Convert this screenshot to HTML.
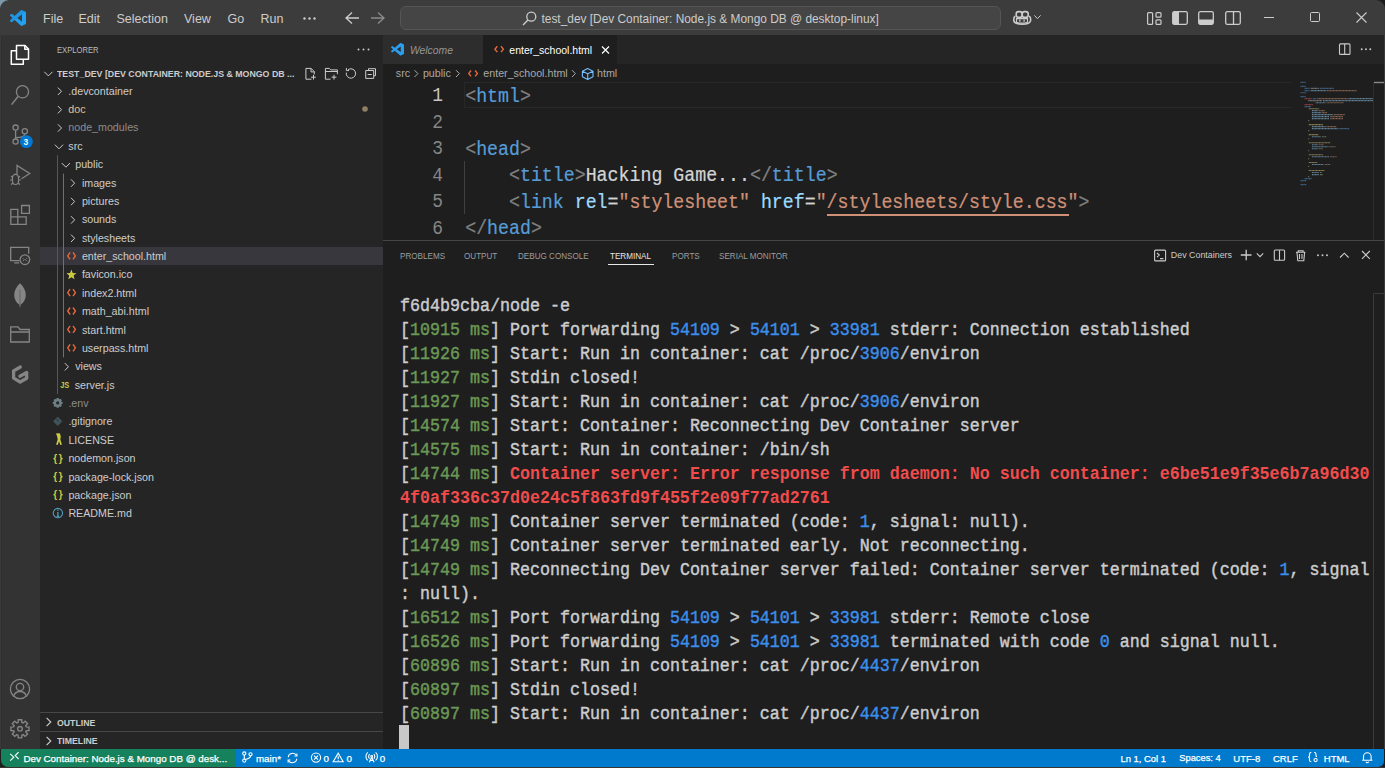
<!DOCTYPE html>
<html><head><meta charset="utf-8">
<style>
*{margin:0;padding:0;box-sizing:border-box}
html,body{width:1385px;height:768px;overflow:hidden;background:#1e1e1e}
body{position:relative;font-family:"Liberation Sans",sans-serif;color:#cccccc}
.a{position:absolute}
.t{position:absolute;white-space:pre}
svg{position:absolute;overflow:visible}
.menu{position:absolute;font-size:12.5px;color:#cccccc;top:12px;line-height:15px}
.row{position:absolute;left:40px;width:343px;height:18.33px;font-size:10.7px;line-height:18.33px;color:#cccccc;white-space:pre}
.term{position:absolute;left:400px;font-family:"Liberation Mono",monospace;font-size:16.67px;line-height:24px;color:#cccccc;white-space:pre;transform:scaleY(1.1);transform-origin:0 16px;-webkit-text-stroke:0.4px}
.g{color:#6a9955}.b{color:#3b8eea}.r{color:#f14c4c;font-weight:bold;-webkit-text-stroke:0}
.code{position:absolute;left:465.2px;font-family:"Liberation Mono",monospace;font-size:18.25px;line-height:26.3px;white-space:pre;color:#d4d4d4;-webkit-text-stroke:0.2px;transform:scaleY(1.1);transform-origin:0 17.9px}
.tg{color:#569cd6}.br{color:#808080}.at{color:#9cdcfe}.st{color:#ce9178}
.ln{position:absolute;width:443px;left:0;text-align:right;font-family:"Liberation Mono",monospace;font-size:17.9px;line-height:26.3px;color:#858585;transform:scaleY(1.08);transform-origin:0 18px}
.ptab{position:absolute;top:249.6px;font-size:9.6px;line-height:11px;color:#9d9d9d;white-space:pre;transform:scaleX(0.845);transform-origin:0 0}
.sb{position:absolute;top:752px;font-size:10.8px;line-height:12px;color:#ffffff;white-space:pre}
</style></head><body>
<!-- backgrounds -->
<div class="a" style="left:0;top:0;width:1385px;height:35px;background:#3c3c3c"></div>
<div class="a" style="left:0;top:35px;width:40px;height:714px;background:#333333"></div>
<div class="a" style="left:0;top:35px;width:1px;height:714px;background:#3a3a3a"></div><div class="a" style="left:1px;top:35px;width:1px;height:714px;background:#2f2f2f"></div>
<div class="a" style="left:40px;top:35px;width:343px;height:714px;background:#252526"></div>
<div class="a" style="left:383px;top:35px;width:1001px;height:29px;background:#252526"></div>
<div class="a" style="left:1384px;top:35px;width:1px;height:714px;background:#3c3c3c"></div>
<div class="a" style="left:0;top:767px;width:1385px;height:1px;background:#3a3530"></div>
<div class="a" style="left:1px;top:749px;width:235px;height:18px;background:#16825d;border-bottom-left-radius:7px"></div>
<div class="a" style="left:236px;top:749px;width:1148px;height:18px;background:#007acc;border-bottom-right-radius:6px"></div>

<svg style="left:0;top:0" width="1385" height="12" viewBox="0 0 1385 12"><path d="M1376 0H1385V9A9 9 0 0 0 1376 0z" fill="#1c1c1c"/><path d="M0 0H9A9 9 0 0 0 0 9z" fill="#7d98aa"/></svg>
<!-- title bar content -->
<svg style="left:10px;top:10px" width="16" height="16" viewBox="0 0 100 100"><path fill="#23a1f0" d="M96.46 10.8L75.86.87a6.23 6.23 0 0 0-7.1 1.2L29.35 38.05 12.19 25a4.16 4.16 0 0 0-5.32.24L1.36 30.25a4.17 4.17 0 0 0 0 6.16L16.24 50 1.35 63.59a4.17 4.17 0 0 0 0 6.160l5.51 5a4.16 4.16 0 0 0 5.32.24l17.16-13 39.41 35.95a6.2 6.2 0 0 0 7.1 1.2l20.6-9.92a6.25 6.25 0 0 0 3.54-5.630V16.43a6.25 6.25 0 0 0-3.53-5.630zM75 72.7L45.1 50 75 27.3z"/><path fill="#1b80c8" d="M96.46 10.8L75.86.87a6.23 6.23 0 0 0-7.1 1.2L29.35 38.05 12.19 25a4.16 4.16 0 0 0-5.32.24L1.36 30.25a4.17 4.17 0 0 0 0 6.16L16.24 50 1.35 63.59a4.17 4.17 0 0 0 0 6.16l5.51 5a4.16 4.16 0 0 0 5.32.24L75 27.3z" opacity="0.35"/></svg>
<div class="menu" style="left:43px">File</div>
<div class="menu" style="left:78.5px">Edit</div>
<div class="menu" style="left:116.5px">Selection</div>
<div class="menu" style="left:184px">View</div>
<div class="menu" style="left:227.5px">Go</div>
<div class="menu" style="left:260.5px">Run</div>
<svg style="left:303px;top:17px" width="14" height="3"><circle cx="1.5" cy="1.5" r="1.2" fill="#cccccc"/><circle cx="6.5" cy="1.5" r="1.2" fill="#cccccc"/><circle cx="11.5" cy="1.5" r="1.2" fill="#cccccc"/></svg>
<svg style="left:344px;top:11px" width="16" height="14" viewBox="0 0 16 14"><path d="M8 1.5L2 7l6 5.5M2 7h13" fill="none" stroke="#cccccc" stroke-width="1.3"/></svg>
<svg style="left:370px;top:11px" width="16" height="14" viewBox="0 0 16 14"><path d="M8 1.5L14 7l-6 5.5M14 7H1" fill="none" stroke="#8b8b8b" stroke-width="1.3"/></svg>
<div class="a" style="left:399.5px;top:6px;width:601.5px;height:24px;border:1px solid #555555;border-radius:6px;background:#454545"></div>
<svg style="left:522px;top:11px" width="15" height="15" viewBox="0 0 15 15"><circle cx="9.3" cy="5.7" r="4.5" fill="none" stroke="#cccccc" stroke-width="1.3"/><path d="M6.2 8.8L1 14" stroke="#cccccc" stroke-width="1.4"/></svg>
<div class="t" style="left:541.5px;top:12px;font-size:11.9px;line-height:14px;color:#cccccc">test_dev [Dev Container: Node.js &amp; Mongo DB @ desktop-linux]</div>
<svg style="left:0;top:0" width="1385" height="35" viewBox="0 0 1385 35"><g fill="none" stroke="#cccccc" stroke-width="1.6"><rect x="1016.2" y="11.6" width="6" height="5.8" rx="2.4"/><rect x="1022.2" y="11.6" width="6" height="5.8" rx="2.4"/><path d="M1015.2 16.2c-1.2.8-1.6 2.6-1.4 4.4.4 2.6 3.8 3.6 8.4 3.6s8-1 8.4-3.6c.2-1.8-.2-3.6-1.4-4.4"/><path d="M1016.5 18.6h11v3.6c-1.5.6-3.5.9-5.5.9s-4-.3-5.5-.9z" stroke-width="1.2"/></g><path d="M1019.9 19.6v2.2M1024.1 19.6v2.2" stroke="#cccccc" stroke-width="1.3"/></svg>
<svg style="left:1034px;top:15px" width="8" height="5" viewBox="0 0 8 5"><path d="M.4.4L3.4 3.6 6.6.4" fill="none" stroke="#cccccc" stroke-width="1"/></svg>
<svg style="left:1147px;top:12px" width="15" height="13" viewBox="0 0 15 13"><rect x="0.6" y="0.6" width="5" height="11.8" rx="1" fill="none" stroke="#cccccc" stroke-width="1.2"/><rect x="9" y="0.6" width="5" height="4.6" rx="1" fill="none" stroke="#cccccc" stroke-width="1.2"/><rect x="9" y="7.8" width="5" height="4.6" rx="1" fill="none" stroke="#cccccc" stroke-width="1.2"/></svg>
<svg style="left:1172px;top:11px" width="16" height="14" viewBox="0 0 16 14"><rect x="0.7" y="0.7" width="14.6" height="12.6" rx="1.5" fill="none" stroke="#cccccc" stroke-width="1.3"/><rect x="1" y="1" width="6" height="12" fill="#cccccc"/></svg>
<svg style="left:1198px;top:11px" width="16" height="14" viewBox="0 0 16 14"><rect x="0.7" y="0.7" width="14.6" height="12.6" rx="1.5" fill="none" stroke="#cccccc" stroke-width="1.3"/><rect x="1" y="8.5" width="14" height="4.5" fill="#cccccc"/></svg>
<svg style="left:1224.5px;top:11px" width="16" height="14" viewBox="0 0 16 14"><rect x="0.7" y="0.7" width="14.6" height="12.6" rx="1.5" fill="none" stroke="#cccccc" stroke-width="1.3"/><path d="M8.5 1v12" stroke="#cccccc" stroke-width="1.3"/></svg>
<div class="a" style="left:1264px;top:17px;width:10px;height:1px;background:#cccccc"></div>
<div class="a" style="left:1310px;top:12px;width:10px;height:10px;border:1px solid #cccccc;border-radius:1.5px"></div>
<svg style="left:1355.5px;top:12px" width="11" height="11" viewBox="0 0 11 11"><path d="M.5.5l10 10M10.5.5l-10 10" stroke="#cccccc" stroke-width="1.1"/></svg>

<!-- activity bar icons -->
<svg style="left:0;top:0" width="40" height="768" viewBox="0 0 40 768">
<g fill="none" stroke="#ffffff" stroke-width="1.5" stroke-linejoin="round">
<path d="M16.5 45.5h8.5l3.5 3.5v10.2h-12z"/><path d="M24.8 45.5v3.7h3.6"/>
<path d="M16.5 50.8h-5.2v13.4h12v-5"/>
</g>
<g fill="none" stroke="#858585" stroke-width="1.3">
<circle cx="22.5" cy="91.8" r="6.1"/><path d="M18 96.5L11.6 104.6" stroke-width="1.5"/>
<circle cx="15.6" cy="127.6" r="2.6"/><circle cx="15.6" cy="141.6" r="2.6"/><circle cx="24.8" cy="131.3" r="2.6"/>
<path d="M15.6 130.2v8.8M24.8 133.9c0 3-3 3.6-9.2 3.8"/>
<path d="M17 174.5V165.5l12.7 8-8.2 5.2"/>
<path d="M12.5 177.5a3 3 0 0 1 6 0v3.5a3 3.5 0 0 1-6 0zM11 176.3l1.5 1.2M20 176.3l-1.5 1.2M10 180h2.5M21 180h-2.5M11 184.5l1.8-1.3M20 184.5l-1.8-1.3M14 175.3a1.5 1.3 0 0 1 3 0" stroke-width="1.2"/>
<path d="M10.8 209.3h7v7.5h-7zM10.8 216.8h7v7.6h-7zM17.8 216.8h8.4v7.6h-8.4zM21.6 205.5h7.8v7.8h-7.8z" stroke-width="1.3"/>
<path d="M19.5 260.6h-8.8v-13.3h18v6.5M14.2 262.9h5" stroke-width="1.3"/>
<circle cx="24.9" cy="259.7" r="4.8" stroke-width="1.3"/>
<path d="M22.8 258.2l1.5 1.5-1.5 1.5M27 258.2l-1.5 1.5 1.5 1.5" stroke-width="0.9"/>
<path d="M10.7 342h18.6v-12.5h-9.3l-2-2.7h-7.3z M10.7 332h18.6" stroke-width="1.3"/>
<path d="M20.3 367L13.6 370.9v7.3l6.5 3.8 6.6-3.8v-5.7l-6.8 3.7" stroke-width="3.3" stroke-linecap="round" stroke-linejoin="round"/>
<circle cx="20" cy="689" r="9.6" stroke-width="1.3"/><circle cx="20" cy="687" r="3.7" stroke-width="1.3"/>
<path d="M13.5 696.5c1-3.5 3.5-5 6.5-5s5.5 1.5 6.5 5" stroke-width="1.3"/>
<path d="M18.05 722.48 L18.25 719.76 L21.65 719.76 L21.85 722.48 L23.08 722.99 L25.14 721.20 L27.55 723.61 L25.76 725.67 L26.27 726.90 L28.99 727.10 L28.99 730.50 L26.27 730.70 L25.76 731.93 L27.55 733.99 L25.14 736.40 L23.08 734.61 L21.85 735.12 L21.65 737.84 L18.25 737.84 L18.05 735.12 L16.82 734.61 L14.76 736.40 L12.35 733.99 L14.14 731.93 L13.63 730.70 L10.91 730.50 L10.91 727.10 L13.63 726.90 L14.14 725.67 L12.35 723.61 L14.76 721.20 L16.82 722.99z" stroke-width="1.4" stroke-linejoin="miter"/>
<circle cx="19.95" cy="728.8" r="2.3" stroke-width="1.4"/>
</g>
<path d="M20 283.2c3.5 3.2 5.8 7.5 5.8 11.8 0 4.8-2.8 8.2-5.2 9.5l-.3 2.7h-.6l-.3-2.7c-2.4-1.3-5.2-4.7-5.2-9.5 0-4.3 2.3-8.6 5.8-11.8z" fill="#858585"/>
<path d="M20 290v14" stroke="#5a5a5a" stroke-width="0.8"/>
<circle cx="26.4" cy="141.6" r="6.4" fill="#0078d4"/>
</svg>
<div class="t" style="left:23.4px;top:136.5px;font-size:8.5px;line-height:10px;font-weight:bold;color:#ffffff">3</div>

<!-- sidebar -->
<div class="a" style="left:40px;top:247.06px;width:343px;height:18.1px;background:#37373d"></div>
<svg style="left:0;top:0" width="383" height="768" viewBox="0 0 383 768">
<path d="M44.3 71.8l4.1 4.1 4.1-4.1" fill="none" stroke="#cccccc" stroke-width="1"/>
<g fill="none" stroke="#cccccc" stroke-width="1">
<path d="M311.5 79.2h-5.6v-10.8h5.2l3.2 3.2v2.8M311 68.4v3.5h3.4M313.5 74.8v4.8M311.1 77.2h4.8"/>
<path d="M330.5 79.2h-5.1v-10.8h4l1.3 1.5h6.7v4.2M325.4 71.5h11.9M334 74.8v4.8M331.6 77.2h4.8"/>
<path d="M346.3 72.6A4.7 4.7 0 1 0 348 69.8M346.4 68v2.6h2.6"/>
<path d="M368.5 70.3v-1.6h7v7h-1.6M365.7 70.5h8v7.9h-8zM367.6 74.5h4.2"/>
</g>
<path d="M57.5 155.2V394.0" stroke="#585858" stroke-width="1"/>
<path d="M63.5 173.6V357.3" stroke="#707070" stroke-width="1"/>
<path d="M57.9 87.6l3.6 3.7-3.6 3.7" fill="none" stroke="#cccccc" stroke-width="1"/>
<path d="M57.9 106.0l3.6 3.7-3.6 3.7" fill="none" stroke="#cccccc" stroke-width="1"/>
<path d="M57.9 124.3l3.6 3.7-3.6 3.7" fill="none" stroke="#cccccc" stroke-width="1"/>
<path d="M54.9 144.7l4.1 4.1 4.1-4.1" fill="none" stroke="#cccccc" stroke-width="1"/>
<path d="M61.8 163.1l4.1 4.1 4.1-4.1" fill="none" stroke="#cccccc" stroke-width="1"/>
<path d="M71.0 179.4l3.6 3.7-3.6 3.7" fill="none" stroke="#cccccc" stroke-width="1"/>
<path d="M71.0 197.8l3.6 3.7-3.6 3.7" fill="none" stroke="#cccccc" stroke-width="1"/>
<path d="M71.0 216.2l3.6 3.7-3.6 3.7" fill="none" stroke="#cccccc" stroke-width="1"/>
<path d="M71.0 234.6l3.6 3.7-3.6 3.7" fill="none" stroke="#cccccc" stroke-width="1"/>
<path d="M70.1 252.4l-2.4 3.5 2.4 3.5M73 252.4l2.4 3.5-2.4 3.5" fill="none" stroke="#e8673b" stroke-width="1.4"/>
<polygon points="71.40,269.60 72.75,273.04 76.44,273.26 73.59,275.61 74.52,279.19 71.40,277.20 68.28,279.19 69.21,275.61 66.36,273.26 70.05,273.04" fill="#cbcb41"/>
<path d="M70.1 289.2l-2.4 3.5 2.4 3.5M73 289.2l2.4 3.5-2.4 3.5" fill="none" stroke="#e8673b" stroke-width="1.4"/>
<path d="M70.1 307.5l-2.4 3.5 2.4 3.5M73 307.5l2.4 3.5-2.4 3.5" fill="none" stroke="#e8673b" stroke-width="1.4"/>
<path d="M70.1 325.9l-2.4 3.5 2.4 3.5M73 325.9l2.4 3.5-2.4 3.5" fill="none" stroke="#e8673b" stroke-width="1.4"/>
<path d="M70.1 344.3l-2.4 3.5 2.4 3.5M73 344.3l2.4 3.5-2.4 3.5" fill="none" stroke="#e8673b" stroke-width="1.4"/>
<path d="M64.8 363.1l3.6 3.7-3.6 3.7" fill="none" stroke="#cccccc" stroke-width="1"/>
<text x="60.2" y="387.7" font-family="Liberation Sans" font-size="8.6" font-weight="bold" fill="#cbcb41" textLength="9" lengthAdjust="spacingAndGlyphs">JS</text>
<path d="M60.99 401.42 L62.60 401.90 L62.60 403.88 L60.99 404.36 L61.06 404.18 L61.87 405.65 L60.46 407.06 L58.99 406.25 L59.17 406.18 L58.69 407.79 L56.71 407.79 L56.23 406.18 L56.41 406.25 L54.94 407.06 L53.53 405.65 L54.34 404.18 L54.41 404.36 L52.80 403.88 L52.80 401.90 L54.41 401.42 L54.34 401.60 L53.53 400.13 L54.94 398.72 L56.41 399.53 L56.23 399.60 L56.71 397.99 L58.69 397.99 L59.17 399.60 L58.99 399.53 L60.46 398.72 L61.87 400.13 L61.06 401.60z M56.10 402.89a1.6 1.6 0 1 0 3.2 0a1.6 1.6 0 1 0-3.2 0z" fill="#6d8086" fill-rule="evenodd"/>
<path d="M57.7 416.7l4.6 4.6-4.6 4.6-4.6-4.6z" fill="#41535b"/><path d="M56.5 419.3l2.4 2.4" stroke="#252526" stroke-width="0.9"/>
<path d="M56 433.6l2 -0.3 2 0.3 0.8 3-0.5 3 1.6 5-1.6 0.3-1.3-3.7-1.3 3.7-1.6-0.3 1.6-5-0.5-3z" fill="#cbcb41"/>
<text x="53.2" y="461.6" font-family="Liberation Sans" font-size="10" font-weight="bold" fill="#cbcb41">{</text><text x="58.8" y="461.6" font-family="Liberation Sans" font-size="10" font-weight="bold" fill="#cbcb41">}</text>
<text x="53.2" y="480.0" font-family="Liberation Sans" font-size="10" font-weight="bold" fill="#cbcb41">{</text><text x="58.8" y="480.0" font-family="Liberation Sans" font-size="10" font-weight="bold" fill="#cbcb41">}</text>
<text x="53.2" y="498.3" font-family="Liberation Sans" font-size="10" font-weight="bold" fill="#cbcb41">{</text><text x="58.8" y="498.3" font-family="Liberation Sans" font-size="10" font-weight="bold" fill="#cbcb41">}</text>
<circle cx="57.9" cy="513.1" r="4.7" fill="none" stroke="#519aba" stroke-width="1.1"/><path d="M57.9 512.1v4.2M56.6 516.3h2.6" stroke="#519aba" stroke-width="1.3"/><circle cx="57.9" cy="510.3" r="0.8" fill="#519aba"/>
<circle cx="365" cy="109.0" r="2.8" fill="#9b8a6c" opacity="0.9"/>
<path d="M40 712.5h343M40 731.5h343" stroke="#474747" stroke-width="1"/>
<path d="M46.6 717.8l4.2 4.2-4.2 4.2M46.6 736.8l4.2 4.2-4.2 4.2" fill="none" stroke="#cccccc" stroke-width="1.1"/>
</svg>
<div class="row" style="left:68.3px;top:81.73px;width:auto;color:#cccccc">.devcontainer</div>
<div class="row" style="left:68.3px;top:100.10px;width:auto;color:#e2c08d">doc</div>
<div class="row" style="left:68.3px;top:118.47px;width:auto;color:#8c8c8c">node_modules</div>
<div class="row" style="left:68.3px;top:136.84px;width:auto;color:#cccccc">src</div>
<div class="row" style="left:75.2px;top:155.21px;width:auto;color:#cccccc">public</div>
<div class="row" style="left:81.9px;top:173.58px;width:auto;color:#cccccc">images</div>
<div class="row" style="left:81.9px;top:191.95px;width:auto;color:#cccccc">pictures</div>
<div class="row" style="left:81.9px;top:210.32px;width:auto;color:#cccccc">sounds</div>
<div class="row" style="left:81.9px;top:228.69px;width:auto;color:#cccccc">stylesheets</div>
<div class="row" style="left:81.9px;top:247.06px;width:auto;color:#cccccc">enter_school.html</div>
<div class="row" style="left:81.9px;top:265.43px;width:auto;color:#cccccc">favicon.ico</div>
<div class="row" style="left:81.9px;top:283.80px;width:auto;color:#cccccc">index2.html</div>
<div class="row" style="left:81.9px;top:302.17px;width:auto;color:#cccccc">math_abi.html</div>
<div class="row" style="left:81.9px;top:320.54px;width:auto;color:#cccccc">start.html</div>
<div class="row" style="left:81.9px;top:338.91px;width:auto;color:#cccccc">userpass.html</div>
<div class="row" style="left:75.2px;top:357.28px;width:auto;color:#cccccc">views</div>
<div class="row" style="left:74.7px;top:375.65px;width:auto;color:#cccccc">server.js</div>
<div class="row" style="left:68.4px;top:394.02px;width:auto;color:#8c8c8c">.env</div>
<div class="row" style="left:68.4px;top:412.39px;width:auto;color:#cccccc">.gitignore</div>
<div class="row" style="left:68.4px;top:430.76px;width:auto;color:#cccccc">LICENSE</div>
<div class="row" style="left:68.4px;top:449.13px;width:auto;color:#cccccc">nodemon.json</div>
<div class="row" style="left:68.4px;top:467.50px;width:auto;color:#cccccc">package-lock.json</div>
<div class="row" style="left:68.4px;top:485.87px;width:auto;color:#cccccc">package.json</div>
<div class="row" style="left:68.4px;top:504.24px;width:auto;color:#cccccc">README.md</div>
<div class="t" style="left:57px;top:43.6px;font-size:9.8px;line-height:11px;color:#bbbbbb;transform:scaleX(0.78);transform-origin:0 0">EXPLORER</div>
<svg style="left:357px;top:48px" width="13" height="3"><circle cx="1.5" cy="1.5" r="0.95" fill="#cccccc"/><circle cx="6.5" cy="1.5" r="0.95" fill="#cccccc"/><circle cx="11.5" cy="1.5" r="0.95" fill="#cccccc"/></svg>
<div class="t" style="left:57px;top:67.6px;font-size:9.6px;line-height:11px;font-weight:bold;color:#cccccc;transform:scaleX(0.917);transform-origin:0 0">TEST_DEV [DEV CONTAINER: NODE.JS &amp; MONGO DB ...</div>
<div class="t" style="left:57px;top:716.8px;font-size:9.4px;line-height:11px;font-weight:bold;color:#cccccc;transform:scaleX(0.93);transform-origin:0 0">OUTLINE</div>
<div class="t" style="left:57px;top:734.8px;font-size:9.4px;line-height:11px;font-weight:bold;color:#cccccc;transform:scaleX(0.93);transform-origin:0 0">TIMELINE</div>
<!-- editor -->
<div class="a" style="left:383px;top:35px;width:99.6px;height:29px;background:#2d2d2d"></div>
<div class="a" style="left:482.6px;top:35px;width:134.4px;height:29px;background:#1e1e1e"></div>
<svg style="left:391px;top:43.3px" width="13" height="12.5" viewBox="0 0 100 100" preserveAspectRatio="none"><path fill="#2a9ef0" d="M96.46 10.8L75.86.87a6.23 6.23 0 0 0-7.1 1.2L29.35 38.05 12.19 25a4.16 4.16 0 0 0-5.32.24L1.36 30.25a4.17 4.17 0 0 0 0 6.16L16.24 50 1.35 63.59a4.17 4.17 0 0 0 0 6.16l5.51 5a4.16 4.16 0 0 0 5.32.24l17.16-13 39.41 35.95a6.2 6.2 0 0 0 7.1 1.2l20.6-9.92a6.25 6.25 0 0 0 3.54-5.63V16.43a6.25 6.25 0 0 0-3.53-5.63zM75 72.7L45.1 50 75 27.3z"/></svg>
<div class="t" style="left:409.9px;top:44.5px;font-size:10.4px;line-height:12px;font-style:italic;color:#969696">Welcome</div>
<svg style="left:0;top:0" width="1385" height="90" viewBox="0 0 1385 90">
<path d="M497.3 46.3l-2.4 2.9 2.4 2.9M501 46.3l2.4 2.9-2.4 2.9" fill="none" stroke="#e8673b" stroke-width="1.4"/>
<path d="M602 46.5l7 7M609 46.5l-7 7" stroke="#ffffff" stroke-width="1.2"/>
<rect x="1339.5" y="43.9" width="10.5" height="10.5" rx="1" fill="none" stroke="#cccccc" stroke-width="1.1"/><path d="M1344.7 44v10.3" stroke="#cccccc" stroke-width="1.1"/>
<circle cx="1361.7" cy="49.3" r="0.95" fill="#cccccc"/><circle cx="1366" cy="49.3" r="0.95" fill="#cccccc"/><circle cx="1370.3" cy="49.3" r="0.95" fill="#cccccc"/>
<path d="M414.5 70.2l3.4 3.4-3.4 3.4" fill="none" stroke="#a9a9a9" stroke-width="1"/>
<path d="M456.0 70.2l3.4 3.4-3.4 3.4" fill="none" stroke="#a9a9a9" stroke-width="1"/>
<path d="M572.0 70.2l3.4 3.4-3.4 3.4" fill="none" stroke="#a9a9a9" stroke-width="1"/>
<path d="M471 70.5l-2.2 2.9 2.2 2.9M475.2 70.5l2.2 2.9-2.2 2.9" fill="none" stroke="#e8673b" stroke-width="1.4"/>
<path d="M587.7 68.6l5.3 2.6v5.6l-5.3 2.6-5.3-2.6v-5.6zM582.4 71.2l5.3 2.6 5.3-2.6M587.7 73.8v5.6" fill="none" stroke="#75beff" stroke-width="1.1" stroke-linejoin="round"/>
</svg>
<div class="t" style="left:509.3px;top:44px;font-size:10.5px;line-height:12px;color:#ffffff">enter_school.html</div>
<div class="t" style="left:395.8px;font-size:10.7px;line-height:12px;color:#a9a9a9;top:67.3px">src</div>
<div class="t" style="left:422.9px;font-size:10.7px;line-height:12px;color:#a9a9a9;top:67.3px">public</div>
<div class="t" style="left:483.3px;font-size:10.7px;line-height:12px;color:#a9a9a9;top:67.3px">enter_school.html</div>
<div class="t" style="left:597px;font-size:10.7px;line-height:12px;color:#a9a9a9;top:67.3px">html</div>
<div class="a" style="left:464px;top:82px;width:828px;height:26.3px;border:1px solid #282828;border-right:0"></div>
<div class="ln" style="top:83.0px;color:#c6c6c6">1</div>
<div class="ln" style="top:109.5px;color:#858585">2</div>
<div class="ln" style="top:136.0px;color:#858585">3</div>
<div class="ln" style="top:162.5px;color:#858585">4</div>
<div class="ln" style="top:189.0px;color:#858585">5</div>
<div class="ln" style="top:215.5px;color:#858585">6</div>
<div class="code" style="top:83.6px"><span class="br">&lt;</span><span class="tg">html</span><span class="br">&gt;</span></div>
<div class="code" style="top:110.1px"></div>
<div class="code" style="top:136.6px"><span class="br">&lt;</span><span class="tg">head</span><span class="br">&gt;</span></div>
<div class="code" style="top:163.1px">    <span class="br">&lt;</span><span class="tg">title</span><span class="br">&gt;</span>Hacking Game...<span class="br">&lt;/</span><span class="tg">title</span><span class="br">&gt;</span></div>
<div class="code" style="top:189.6px">    <span class="br">&lt;</span><span class="tg">link</span> <span class="at">rel</span>=<span class="st">"stylesheet"</span> <span class="at">href</span>=<span class="st">"/stylesheets/style.css"</span><span class="br">&gt;</span></div>
<div class="code" style="top:216.1px"><span class="br">&lt;/</span><span class="tg">head</span><span class="br">&gt;</span></div>
<div class="a" style="left:827px;top:214px;width:242px;height:1.5px;background:#ce9178"></div>
<div class="a" style="left:464px;top:161px;width:1px;height:52.6px;background:#404040"></div>
<svg style="left:0;top:0" width="1385" height="240" viewBox="0 0 1385 240">
<path d="M1300.5 82.38h5.1" stroke="#4a7fae" stroke-width="1.1" stroke-dasharray="1.1 0.35" opacity="0.75"/>
<path d="M1300.5 86.39h5.1" stroke="#4a7fae" stroke-width="1.1" stroke-dasharray="1.1 0.35" opacity="0.75"/>
<path d="M1304.6 88.39h4.9" stroke="#4a7fae" stroke-width="1.1" stroke-dasharray="1.1 0.35" opacity="0.75"/>
<path d="M1310.7 88.39h8.0" stroke="#9a9a9a" stroke-width="1.1" stroke-dasharray="1.1 0.35" opacity="0.75"/>
<path d="M1319.8 88.39h14.0" stroke="#4a7fae" stroke-width="1.1" stroke-dasharray="1.1 0.35" opacity="0.75"/>
<path d="M1304.6 90.58h4.9" stroke="#4a7fae" stroke-width="1.1" stroke-dasharray="1.1 0.35" opacity="0.75"/>
<path d="M1310.7 90.58h15.9" stroke="#7aa6c2" stroke-width="1.1" stroke-dasharray="1.1 0.35" opacity="0.75"/>
<path d="M1327.1 90.58h29.5" stroke="#a77a63" stroke-width="1.1" stroke-dasharray="1.1 0.35" opacity="0.75"/>
<path d="M1300.5 92.76h6.0" stroke="#4a7fae" stroke-width="1.1" stroke-dasharray="1.1 0.35" opacity="0.75"/>
<path d="M1300.5 96.59h5.1" stroke="#4a7fae" stroke-width="1.1" stroke-dasharray="1.1 0.35" opacity="0.75"/>
<path d="M1304.6 98.59h7.3" stroke="#c04a4a" stroke-width="1.1" stroke-dasharray="1.1 0.35" opacity="0.75"/>
<path d="M1312.8 98.59h3.6" stroke="#4a7fae" stroke-width="1.1" stroke-dasharray="1.1 0.35" opacity="0.75"/>
<path d="M1317.4 98.59h30.1" stroke="#a77a63" stroke-width="1.1" stroke-dasharray="1.1 0.35" opacity="0.75"/>
<path d="M1348.4 98.59h24.6" stroke="#7aa6c2" stroke-width="1.1" stroke-dasharray="1.1 0.35" opacity="0.75"/>
<path d="M1308.3 100.60h13.7" stroke="#9a9a9a" stroke-width="1.1" stroke-dasharray="1.1 0.35" opacity="0.75"/>
<path d="M1322.9 100.60h50.1" stroke="#7aa6c2" stroke-width="1.1" stroke-dasharray="1.1 0.35" opacity="0.75"/>
<path d="M1315.6 102.79h10.0" stroke="#7aa6c2" stroke-width="1.1" stroke-dasharray="1.1 0.35" opacity="0.75"/>
<path d="M1326.5 102.79h17.3" stroke="#a77a63" stroke-width="1.1" stroke-dasharray="1.1 0.35" opacity="0.75"/>
<path d="M1304.6 104.61h8.2" stroke="#c04a4a" stroke-width="1.1" stroke-dasharray="1.1 0.35" opacity="0.75"/>
<path d="M1304.6 106.61h6.4" stroke="#4a7fae" stroke-width="1.1" stroke-dasharray="1.1 0.35" opacity="0.75"/>
<path d="M1308.8 108.80h10.4" stroke="#b9a76a" stroke-width="1.1" stroke-dasharray="1.1 0.35" opacity="0.75"/>
<path d="M1311.9 110.62h6.4" stroke="#7aa6c2" stroke-width="1.1" stroke-dasharray="1.1 0.35" opacity="0.75"/>
<path d="M1319.2 110.62h5.5" stroke="#a77a63" stroke-width="1.1" stroke-dasharray="1.1 0.35" opacity="0.75"/>
<path d="M1311.9 112.62h9.1" stroke="#7aa6c2" stroke-width="1.1" stroke-dasharray="1.1 0.35" opacity="0.75"/>
<path d="M1321.6 112.62h5.8" stroke="#a77a63" stroke-width="1.1" stroke-dasharray="1.1 0.35" opacity="0.75"/>
<path d="M1311.9 114.63h21.0" stroke="#7aa6c2" stroke-width="1.1" stroke-dasharray="1.1 0.35" opacity="0.75"/>
<path d="M1333.8 114.63h10.9" stroke="#a77a63" stroke-width="1.1" stroke-dasharray="1.1 0.35" opacity="0.75"/>
<path d="M1311.9 116.63h17.3" stroke="#7aa6c2" stroke-width="1.1" stroke-dasharray="1.1 0.35" opacity="0.75"/>
<path d="M1330.2 116.63h12.8" stroke="#a77a63" stroke-width="1.1" stroke-dasharray="1.1 0.35" opacity="0.75"/>
<path d="M1311.9 118.64h17.3" stroke="#7aa6c2" stroke-width="1.1" stroke-dasharray="1.1 0.35" opacity="0.75"/>
<path d="M1330.2 118.64h12.8" stroke="#a77a63" stroke-width="1.1" stroke-dasharray="1.1 0.35" opacity="0.75"/>
<path d="M1308.3 120.64h0.9" stroke="#9a9a9a" stroke-width="1.1" stroke-dasharray="1.1 0.35" opacity="0.75"/>
<path d="M1308.8 124.65h14.0" stroke="#b9a76a" stroke-width="1.1" stroke-dasharray="1.1 0.35" opacity="0.75"/>
<path d="M1311.9 126.66h13.7" stroke="#7aa6c2" stroke-width="1.1" stroke-dasharray="1.1 0.35" opacity="0.75"/>
<path d="M1326.5 126.66h10.0" stroke="#a77a63" stroke-width="1.1" stroke-dasharray="1.1 0.35" opacity="0.75"/>
<path d="M1311.9 128.66h26.4" stroke="#7aa6c2" stroke-width="1.1" stroke-dasharray="1.1 0.35" opacity="0.75"/>
<path d="M1339.3 128.66h10.0" stroke="#4a7fae" stroke-width="1.1" stroke-dasharray="1.1 0.35" opacity="0.75"/>
<path d="M1308.3 130.66h0.9" stroke="#9a9a9a" stroke-width="1.1" stroke-dasharray="1.1 0.35" opacity="0.75"/>
<path d="M1308.8 134.67h9.5" stroke="#b9a76a" stroke-width="1.1" stroke-dasharray="1.1 0.35" opacity="0.75"/>
<path d="M1311.9 136.68h9.1" stroke="#7aa6c2" stroke-width="1.1" stroke-dasharray="1.1 0.35" opacity="0.75"/>
<path d="M1322.0 136.68h4.6" stroke="#7f9a6a" stroke-width="1.1" stroke-dasharray="1.1 0.35" opacity="0.75"/>
<path d="M1308.3 138.68h0.9" stroke="#9a9a9a" stroke-width="1.1" stroke-dasharray="1.1 0.35" opacity="0.75"/>
<path d="M1308.8 142.69h21.3" stroke="#b9a76a" stroke-width="1.1" stroke-dasharray="1.1 0.35" opacity="0.75"/>
<path d="M1311.9 144.69h6.4" stroke="#7aa6c2" stroke-width="1.1" stroke-dasharray="1.1 0.35" opacity="0.75"/>
<path d="M1319.2 144.69h4.6" stroke="#a77a63" stroke-width="1.1" stroke-dasharray="1.1 0.35" opacity="0.75"/>
<path d="M1311.9 146.70h16.4" stroke="#7aa6c2" stroke-width="1.1" stroke-dasharray="1.1 0.35" opacity="0.75"/>
<path d="M1329.2 146.70h6.4" stroke="#a77a63" stroke-width="1.1" stroke-dasharray="1.1 0.35" opacity="0.75"/>
<path d="M1311.9 148.70h6.4" stroke="#7aa6c2" stroke-width="1.1" stroke-dasharray="1.1 0.35" opacity="0.75"/>
<path d="M1319.2 148.70h3.6" stroke="#7f9a6a" stroke-width="1.1" stroke-dasharray="1.1 0.35" opacity="0.75"/>
<path d="M1308.3 150.71h0.9" stroke="#9a9a9a" stroke-width="1.1" stroke-dasharray="1.1 0.35" opacity="0.75"/>
<path d="M1308.8 154.72h14.0" stroke="#b9a76a" stroke-width="1.1" stroke-dasharray="1.1 0.35" opacity="0.75"/>
<path d="M1311.9 156.72h17.3" stroke="#7aa6c2" stroke-width="1.1" stroke-dasharray="1.1 0.35" opacity="0.75"/>
<path d="M1330.2 156.72h6.4" stroke="#a77a63" stroke-width="1.1" stroke-dasharray="1.1 0.35" opacity="0.75"/>
<path d="M1308.3 158.73h0.9" stroke="#9a9a9a" stroke-width="1.1" stroke-dasharray="1.1 0.35" opacity="0.75"/>
<path d="M1308.8 162.55h8.6" stroke="#b9a76a" stroke-width="1.1" stroke-dasharray="1.1 0.35" opacity="0.75"/>
<path d="M1311.9 164.56h11.8" stroke="#7aa6c2" stroke-width="1.1" stroke-dasharray="1.1 0.35" opacity="0.75"/>
<path d="M1324.7 164.56h5.5" stroke="#a77a63" stroke-width="1.1" stroke-dasharray="1.1 0.35" opacity="0.75"/>
<path d="M1308.3 166.56h0.9" stroke="#9a9a9a" stroke-width="1.1" stroke-dasharray="1.1 0.35" opacity="0.75"/>
<path d="M1308.8 170.57h15.9" stroke="#b9a76a" stroke-width="1.1" stroke-dasharray="1.1 0.35" opacity="0.75"/>
<path d="M1311.9 172.57h7.3" stroke="#7aa6c2" stroke-width="1.1" stroke-dasharray="1.1 0.35" opacity="0.75"/>
<path d="M1320.1 172.57h1.8" stroke="#7f9a6a" stroke-width="1.1" stroke-dasharray="1.1 0.35" opacity="0.75"/>
<path d="M1311.9 174.58h7.3" stroke="#7aa6c2" stroke-width="1.1" stroke-dasharray="1.1 0.35" opacity="0.75"/>
<path d="M1320.1 174.58h2.7" stroke="#7f9a6a" stroke-width="1.1" stroke-dasharray="1.1 0.35" opacity="0.75"/>
<path d="M1308.3 176.58h0.9" stroke="#9a9a9a" stroke-width="1.1" stroke-dasharray="1.1 0.35" opacity="0.75"/>
<path d="M1304.6 178.59h7.3" stroke="#4a7fae" stroke-width="1.1" stroke-dasharray="1.1 0.35" opacity="0.75"/>
<path d="M1300.5 180.59h6.0" stroke="#4a7fae" stroke-width="1.1" stroke-dasharray="1.1 0.35" opacity="0.75"/>
<path d="M1300.5 184.60h6.0" stroke="#4a7fae" stroke-width="1.1" stroke-dasharray="1.1 0.35" opacity="0.75"/>
<path d="M1373.5 82v158" stroke="#2e2e2e" stroke-width="1"/>
<path d="M1374 82.5h10" stroke="#8a8a8a" stroke-width="1.4"/>
</svg>
<!-- panel -->
<div class="a" style="left:383px;top:240px;width:1001px;height:1px;background:#454545"></div>
<div class="ptab" style="left:399.5px;color:#9d9d9d">PROBLEMS</div>
<div class="ptab" style="left:463.9px;color:#9d9d9d">OUTPUT</div>
<div class="ptab" style="left:517.9px;color:#9d9d9d">DEBUG CONSOLE</div>
<div class="ptab" style="left:609.7px;color:#e7e7e7">TERMINAL</div>
<div class="ptab" style="left:671.7px;color:#9d9d9d">PORTS</div>
<div class="ptab" style="left:718.5px;color:#9d9d9d">SERIAL MONITOR</div>
<div class="a" style="left:608px;top:263.5px;width:46px;height:1.2px;background:#e7e7e7"></div>
<svg style="left:0;top:0" width="1385" height="768" viewBox="0 0 1385 768">
<g fill="none" stroke="#cccccc" stroke-width="1.1">
<rect x="1154.6" y="250.1" width="11" height="10.8" rx="1"/><path d="M1157 253l2.3 2.1-2.3 2.1M1160 258.6h3.4"/>
<path d="M1246.2 249.8v10.5M1240.8 255h10.7" stroke-width="1.3"/>
<path d="M1256.8 253.4l3.2 3.3 3.2-3.3"/>
<rect x="1274.3" y="250" width="10.3" height="10.3" rx="1"/><path d="M1279.5 250.2v10"/>
<path d="M1296 252.3h9.4M1298.3 252.3v-1.5h4.8v1.5M1297 252.5l.8 8.3h6l.8-8.3M1299.5 254v5M1302 254v5"/>
<path d="M1340 257.5l4.3-4.3 4.3 4.3"/>
<path d="M1362 251l7.8 7.8M1369.8 251l-7.8 7.8"/>
</g>
<circle cx="1318" cy="255.2" r="0.95" fill="#cccccc"/><circle cx="1322.5" cy="255.2" r="0.95" fill="#cccccc"/><circle cx="1327" cy="255.2" r="0.95" fill="#cccccc"/>
<path d="M1373.5 240v-5" stroke="#2e2e2e"/>
<path d="M1373.5 293.5V749M1374 293.5h10" stroke="#3a3a3a" stroke-width="1"/>
</svg>
<div class="t" style="left:1170.8px;top:250px;font-size:8.9px;line-height:11px;color:#cccccc">Dev Containers</div>
<div class="term" style="top:295.0px">f6d4b9cba/node -e</div>
<div class="term" style="top:319.0px">[<span class="g">10915 ms</span>] Port forwarding <span class="b">54109</span> &gt; <span class="b">54101</span> &gt; <span class="b">33981</span> stderr: Connection established</div>
<div class="term" style="top:343.0px">[<span class="g">11926 ms</span>] Start: Run in container: cat /proc/<span class="b">3906</span>/environ</div>
<div class="term" style="top:367.0px">[<span class="g">11927 ms</span>] Stdin closed!</div>
<div class="term" style="top:391.0px">[<span class="g">11927 ms</span>] Start: Run in container: cat /proc/<span class="b">3906</span>/environ</div>
<div class="term" style="top:415.0px">[<span class="g">14574 ms</span>] Start: Container: Reconnecting Dev Container server</div>
<div class="term" style="top:439.0px">[<span class="g">14575 ms</span>] Start: Run in container: /bin/sh</div>
<div class="term" style="top:463.0px">[<span class="g">14744 ms</span>] <span class="r">Container server: Error response from daemon: No such container: e6be51e9f35e6b7a96d30</span></div>
<div class="term" style="top:487.0px"><span class="r">4f0af336c37d0e24c5f863fd9f455f2e09f77ad2761</span></div>
<div class="term" style="top:511.0px">[<span class="g">14749 ms</span>] Container server terminated (code: <span class="b">1</span>, signal: null).</div>
<div class="term" style="top:535.0px">[<span class="g">14749 ms</span>] Container server terminated early. Not reconnecting.</div>
<div class="term" style="top:559.0px">[<span class="g">14749 ms</span>] Reconnecting Dev Container server failed: Container server terminated (code: <span class="b">1</span>, signal</div>
<div class="term" style="top:583.0px">: null).</div>
<div class="term" style="top:607.0px">[<span class="g">16512 ms</span>] Port forwarding <span class="b">54109</span> &gt; <span class="b">54101</span> &gt; <span class="b">33981</span> stderr: Remote close</div>
<div class="term" style="top:631.0px">[<span class="g">16526 ms</span>] Port forwarding <span class="b">54109</span> &gt; <span class="b">54101</span> &gt; <span class="b">33981</span> terminated with code <span class="b">0</span> and signal null.</div>
<div class="term" style="top:655.0px">[<span class="g">60896 ms</span>] Start: Run in container: cat /proc/<span class="b">4437</span>/environ</div>
<div class="term" style="top:679.0px">[<span class="g">60897 ms</span>] Stdin closed!</div>
<div class="term" style="top:703.0px">[<span class="g">60897 ms</span>] Start: Run in container: cat /proc/<span class="b">4437</span>/environ</div>
<div class="a" style="left:399px;top:725px;width:10px;height:24px;background:#c8c8c8"></div>
<!-- status -->
<div class="t" style="left:23.4px;font-size:9.80px;line-height:11px;color:#ffffff;top:753px;-webkit-text-stroke:0.25px #ffffff">Dev Container: Node.js &amp; Mongo DB @ desk...</div>
<div class="t" style="left:255.9px;font-size:9.80px;line-height:11px;color:#ffffff;top:753px;-webkit-text-stroke:0.25px #ffffff">main*</div>
<div class="t" style="left:323.6px;font-size:9.80px;line-height:11px;color:#ffffff;top:753px;-webkit-text-stroke:0.25px #ffffff">0</div>
<div class="t" style="left:346.4px;font-size:9.80px;line-height:11px;color:#ffffff;top:753px;-webkit-text-stroke:0.25px #ffffff">0</div>
<div class="t" style="left:379.7px;font-size:9.80px;line-height:11px;color:#ffffff;top:753px;-webkit-text-stroke:0.25px #ffffff">0</div>
<div class="t" style="left:1120.4px;font-size:9.45px;line-height:11px;color:#ffffff;top:753px;-webkit-text-stroke:0.25px #ffffff">Ln 1, Col 1</div>
<div class="t" style="left:1179.3px;font-size:9.30px;line-height:11px;color:#ffffff;top:753px;-webkit-text-stroke:0.25px #ffffff">Spaces: 4</div>
<div class="t" style="left:1233.3px;font-size:9.50px;line-height:11px;color:#ffffff;top:753px;-webkit-text-stroke:0.25px #ffffff">UTF-8</div>
<div class="t" style="left:1273.0px;font-size:9.50px;line-height:11px;color:#ffffff;top:753px;-webkit-text-stroke:0.25px #ffffff">CRLF</div>
<div class="t" style="left:1323.8px;font-size:9.50px;line-height:11px;color:#ffffff;top:753px;-webkit-text-stroke:0.25px #ffffff">HTML</div>
<svg style="left:0;top:0" width="1385" height="768" viewBox="0 0 1385 768">
<g fill="none" stroke="#ffffff" stroke-width="1.1">
<path d="M10.2 753.8l3.6 3.4-3.6 3.4M18.6 752.2l-3.4 3.4 3.4 3.4"/>
<circle cx="244.3" cy="753.5" r="1.6"/><circle cx="244.3" cy="760.6" r="1.6"/><circle cx="250.5" cy="754.3" r="1.6"/><path d="M244.3 755.1v3.9M250.5 755.9c0 2.5-2.5 3-6 3.6"/>
<path d="M288.3 757.2a4.3 3.9 0 0 1 8.2-1.6M296.7 758.8a4.3 3.9 0 0 1-8.2 1.6"/><path d="M296.9 753.6v2.4h-2.4M288.1 762.4v-2.4h2.4"/>
<circle cx="316" cy="757.6" r="4.6"/><path d="M314 755.6l4 4M318 755.6l-4 4"/>
<path d="M338.2 753.2l5 8.5h-10z"/><path d="M338.2 756.2v3M338.2 760v.8"/>
<path d="M369.6 754.2a3 3 0 0 0 0 4.4M373.8 754.2a3 3 0 0 1 0 4.4M367.8 752.4a5.2 5.2 0 0 0 0 8M375.6 752.4a5.2 5.2 0 0 1 0 8M371.7 757.3l-2.4 5M371.7 757.3l2.4 5M370.2 760.4h3"/><circle cx="371.7" cy="756.4" r="0.9"/>
<path d="M1311.3 752.4c-1.2.1-1.8.7-1.8 1.8v1.6c0 .8-.5 1.2-1.2 1.3.7.1 1.2.5 1.2 1.3v1.6c0 1.1.6 1.7 1.8 1.8"/><circle cx="1315.6" cy="760.1" r="1.6"/><path d="M1314.2 752.4c1.2.1 1.8.7 1.8 1.8v1.2c0 .8.4 1.2 1 1.3"/>
<path d="M1362.2 760.3h10.2M1363.5 760.2v-3.6a3.8 3.8 0 0 1 7.6 0v3.6M1366 761.8a1.4 1.4 0 0 0 2.6 0"/>
</g></svg>
</body></html>
